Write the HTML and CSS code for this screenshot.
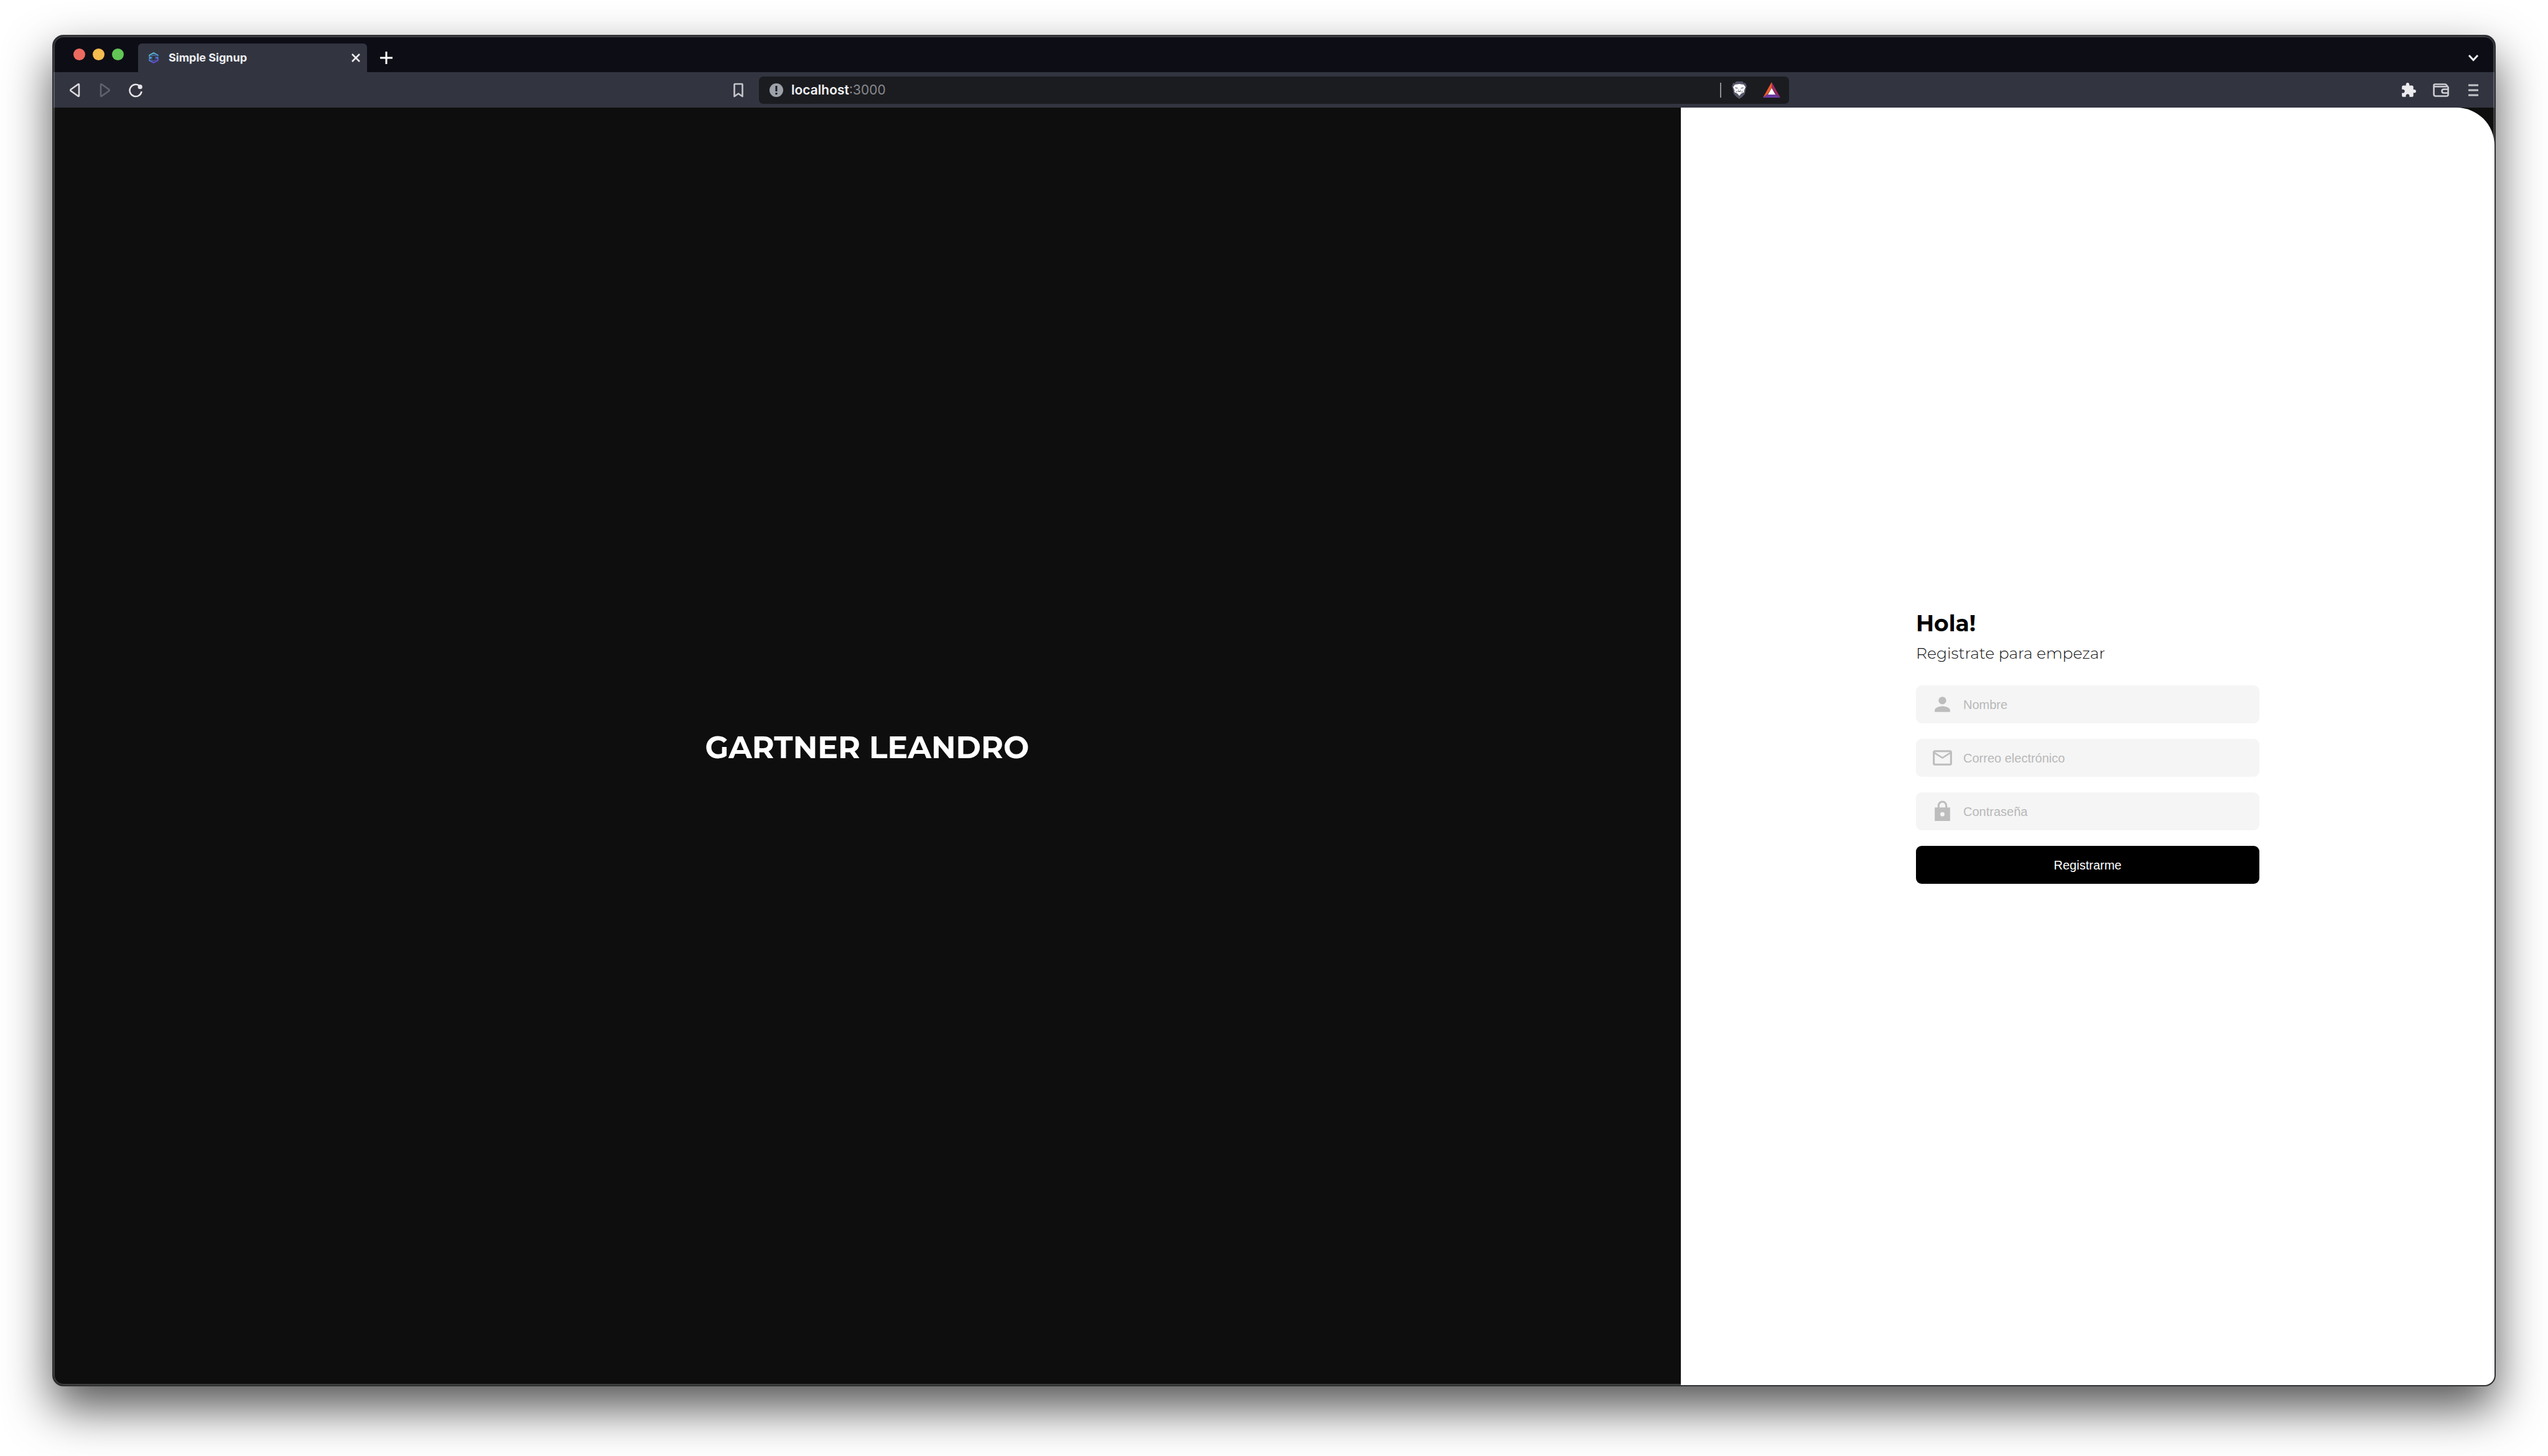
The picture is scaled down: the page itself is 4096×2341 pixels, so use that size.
FILE: index.html
```html
<!DOCTYPE html>
<html lang="es">
<head>
<meta charset="utf-8">
<meta name="viewport" content="width=device-width, initial-scale=1">
<title>Simple Signup</title>
<link rel="stylesheet" href="styles.css">
</head>
<body>
<div class="window">
  <header class="tab-strip">
    <div class="lights">
      <button class="light light-close" type="button" aria-label="Cerrar"></button>
      <button class="light light-min" type="button" aria-label="Minimizar"></button>
      <button class="light light-max" type="button" aria-label="Maximizar"></button>
    </div>
    <div class="tab">
      <svg class="favicon" viewBox="0 0 22 24" fill="none">
        <defs>
          <linearGradient id="fav" x1="4" y1="0" x2="15" y2="24" gradientUnits="userSpaceOnUse">
            <stop offset="0" stop-color="#5ec4c8"/>
            <stop offset=".5" stop-color="#4a90e2"/>
            <stop offset="1" stop-color="#6a35d0"/>
          </linearGradient>
        </defs>
        <path d="M2 8V6.500L11 1.500L20 6.500V8M2 16V17.500L11 22.500L20 17.500V13" stroke="url(#fav)" stroke-width="2.800"/>
        <path d="M5.500 8.500L11 6L16.500 8.500M5.500 16L11 18.500L16.500 16" stroke="url(#fav)" stroke-width="1.200"/>
        <path d="M1 8L9 12L1 16ZM21 9L13 12L21 15Z" fill="url(#fav)"/>
      </svg>
      <span class="tab-title">Simple Signup</span>
      <button class="tab-close" type="button" aria-label="Cerrar pestaña">
        <svg width="14" height="14" viewBox="0 0 14 14" stroke="#ededf0" stroke-width="2.500"><path d="M1 1L13 13M13 1L1 13"/></svg>
      </button>
    </div>
    <button class="icon-button new-tab" type="button" aria-label="Nueva pestaña">
      <svg width="20" height="20" viewBox="0 0 20 20" stroke="#fff" stroke-width="3"><path d="M10 0V20M0 10H20"/></svg>
    </button>
    <button class="icon-button tab-search" type="button" aria-label="Buscar pestañas">
      <svg width="18" height="12" viewBox="0 0 18 12" fill="none" stroke="#ededf0" stroke-width="3"><path d="M2 2L9 9.500L16 2"/></svg>
    </button>
  </header>

  <div class="toolbar">
    <nav class="tools tools-left">
      <button class="icon-button" type="button" aria-label="Atrás">
        <svg width="18" height="24" viewBox="0 0 18 24" fill="none" stroke="#dcdce0" stroke-width="2.600" stroke-linejoin="round"><path d="M16 3.500V20.500Q16 22.500 14.200 21.300L3 13.200Q1.500 12 3 10.800L14.200 2.700Q16 1.500 16 3.500Z"/></svg>
      </button>
      <button class="icon-button" type="button" aria-label="Adelante">
        <svg width="18" height="24" viewBox="0 0 18 24" fill="none" stroke="#60636d" stroke-width="2.600" stroke-linejoin="round"><path d="M2 3.500V20.500Q2 22.500 3.800 21.300L15 13.200Q16.500 12 15 10.800L3.800 2.700Q2 1.500 2 3.500Z"/></svg>
      </button>
      <button class="icon-button" type="button" aria-label="Recargar">
        <svg width="24" height="24" viewBox="0 0 24 24" fill="none" stroke="#e6e6e9" stroke-width="2.500"><path d="M18.500 5.300A9.600 9.600 0 1 0 21.600 14"/><circle cx="19.200" cy="6.700" r="3.600" fill="#e6e6e9" stroke="none"/></svg>
      </button>
    </nav>
    <div class="address">
      <button class="bookmark" type="button" aria-label="Marcador">
        <svg width="16" height="24" viewBox="0 0 16 24" fill="none" stroke="#c6c7cc" stroke-width="2.600" stroke-linejoin="round"><path d="M1.500 22V3Q1.500 2 2.500 2H13.500Q14.500 2 14.500 3V22L8 17.500Z"/></svg>
      </button>
      <div class="url-bar">
        <svg width="22" height="22" viewBox="0 0 22 22"><circle cx="11" cy="11" r="11" fill="#9da1a9"/><path d="M9.500 4H12.500V13H9.500ZM9.500 15H12.500V18H9.500Z" fill="#1b1c20"/></svg>
        <div class="url"><span class="host">localhost</span><span class="port">:3000</span></div>
        <span class="divider"></span>
        <svg class="shield" width="24" height="28" viewBox="0 0 24 28">
          <path d="M7 0H17L19 2.500L22 2.500L24 8L23 10L21 20L17 24.500L12 28L7 24.500L3 20L1 10L0 8L2 2.500L5 2.500Z" fill="#565869"/>
          <path d="M5 5L9 4.500L12 4L15 4.500L19 5L22 9L19.500 15L20 17L15 19.500L12 23L9 19.500L4 17L4.500 15L2 9Z" fill="#fff"/>
          <path d="M5 9.500L9.500 10.300L9 11.600L5.500 10.800ZM19 9.500L14.500 10.300L15 11.600L18.500 10.800ZM10.500 10V14L9 15.500L12 17L15 15.500L13.500 14V10L14 14.500L12 15.800L10 14.500ZM6 15L9 17L7.500 17.500ZM18 15L15 17L16.500 17.500Z" fill="#565869"/>
        </svg>
        <svg width="28" height="25" viewBox="0 0 28 25"><path d="M14 0V9L8 19L0 25Z" fill="#f05a2b"/><path d="M14 0L28 25L20 19L14 9Z" fill="#9e2b62"/><path d="M0 25L8 19H20L28 25Z" fill="#6b3aa0"/><path d="M14 9.500L20 20H8Z" fill="#fff"/></svg>
      </div>
    </div>
    <div class="tools tools-right">
      <button class="icon-button" type="button" aria-label="Extensiones">
        <svg width="26" height="26" viewBox="0 0 24 24" fill="#ececef"><path d="M20.500 11H19V7c0-1.100-.9-2-2-2h-4V3.500C13 2.120 11.880 1 10.500 1S8 2.120 8 3.500V5H4c-1.100 0-1.990.9-1.990 2v3.800H3.500c1.490 0 2.700 1.210 2.700 2.700s-1.210 2.700-2.700 2.700H2V20c0 1.100.9 2 2 2h3.800v-1.500c0-1.490 1.210-2.700 2.700-2.700s2.700 1.210 2.700 2.700V22H17c1.100 0 2-.9 2-2v-4h1.500c1.380 0 2.500-1.120 2.500-2.500S21.880 11 20.500 11z"/></svg>
      </button>
      <button class="icon-button" type="button" aria-label="Cartera">
        <svg width="26" height="22" viewBox="0 0 26 22" fill="none" stroke="#cdced3" stroke-width="2.600" stroke-linejoin="round"><path d="M1.500 3.500Q1.500 1.500 3.500 1.500H19.500Q21 1.500 22 3L24.500 6.500V18Q24.500 20.500 22 20.500H4.500Q1.500 20.500 1.500 17.500Z"/><path d="M2 5.300H22.500"/><path d="M24.500 9.500H17.500Q14.500 9.500 14.500 12.500T17.500 15.500H24.500"/></svg>
      </button>
      <button class="icon-button" type="button" aria-label="Menú">
        <svg width="16" height="20" viewBox="0 0 16 20" stroke="#c4c5ca" stroke-width="3"><path d="M0 2H16M0 10H16M0 18H16"/></svg>
      </button>
    </div>
  </div>

  <main class="page">
    <section class="brand">
      <h1 class="brand-name">GARTNER LEANDRO</h1>
    </section>
    <section class="panel">
      <form class="signup">
        <h2 class="greeting">Hola!</h2>
        <p class="intro">Registrate para empezar</p>
        <div class="fields">
          <label class="field">
            <svg class="field-icon" viewBox="0 0 24 24"><path d="M12 12c2.210 0 4-1.790 4-4s-1.790-4-4-4-4 1.790-4 4 1.790 4 4 4zm0 2c-2.670 0-8 1.340-8 4v2h16v-2c0-2.660-5.330-4-8-4z"/></svg>
            <input class="field-input" type="text" placeholder="Nombre" aria-label="Nombre">
          </label>
          <label class="field">
            <svg class="field-icon" viewBox="0 0 24 24"><path d="M22 6c0-1.100-.9-2-2-2H4c-1.100 0-2 .9-2 2v12c0 1.100.9 2 2 2h16c1.100 0 2-.9 2-2V6zm-2 0l-8 5-8-5h16zm0 12H4V8l8 5 8-5v10z"/></svg>
            <input class="field-input" type="email" placeholder="Correo electrónico" aria-label="Correo electrónico">
          </label>
          <label class="field">
            <svg class="field-icon" viewBox="0 0 24 24"><path fill-rule="evenodd" d="M20 8h-3V6c0-2.760-2.240-5-5-5S7 3.240 7 6v2H4v14h16V8zm-8 9.200a2.200 2.200 0 1 1 0-4.400 2.200 2.200 0 0 1 0 4.400zM9 8V6c0-1.660 1.340-3.100 3-3.100s3 1.440 3 3.100v2H9z"/></svg>
            <input class="field-input" type="password" placeholder="Contraseña" aria-label="Contraseña">
          </label>
          <button class="submit" type="submit">Registrarme</button>
        </div>
      </form>
    </section>
  </main>
</div>
</body>
</html>
```
FILE: styles.css
```css
* {
  box-sizing: border-box;
}

body {
  display: flex;
  min-height: 100vh;
  margin: 0;
  padding: 56px 84px 112px;
  background: #fff;
  font-family: Inter, "Liberation Sans", sans-serif;
}

h1,
h2,
p {
  margin: 0;
}

button {
  padding: 0;
  border: 0;
  background: none;
  cursor: pointer;
}

svg {
  display: block;
  flex: none;
}

/* Browser window */
.window {
  position: relative;
  display: flex;
  flex: 1;
  flex-direction: column;
  overflow: hidden;
  border: 2px solid #2f3032;
  border-radius: 18px;
  background: #0e0e0e;
  box-shadow: 0 35px 76px rgba(0, 0, 0, 0.67);
}

.window::after {
  position: absolute;
  inset: 0;
  border: 2px solid rgba(255, 255, 255, 0.2);
  border-radius: 16px;
  content: "";
  pointer-events: none;
}

.tab-strip {
  display: flex;
  align-items: flex-end;
  height: 58px;
  padding: 0 18px 0 32px;
  background: #0d0d16;
}

.lights {
  display: flex;
  align-self: center;
  gap: 12px;
  margin-right: 23px;
}

.light {
  width: 19px;
  height: 19px;
  border-radius: 50%;
}

.light-close {
  background: #ed6a5f;
}

.light-min {
  background: #f5bd4f;
}

.light-max {
  background: #62c656;
}

.tab {
  display: flex;
  align-items: center;
  width: 368px;
  height: 46px;
  padding: 0 10px 0 16px;
  border-radius: 6px 6px 0 0;
  background: #323540;
}

.favicon {
  width: 18px;
  height: 18px;
}

.tab-title {
  flex: 1;
  margin-left: 15px;
  color: #ededf0;
  font-size: 18px;
  font-weight: 700;
  line-height: 24px;
}

.tab-close {
  display: flex;
  align-items: center;
  justify-content: center;
  width: 16px;
  height: 32px;
}

.icon-button {
  display: flex;
  align-items: center;
  justify-content: center;
  width: 32px;
  height: 46px;
}

.new-tab {
  margin-left: 15px;
}

.tab-search {
  margin-left: auto;
}

.toolbar {
  display: grid;
  grid-template-columns: 1093fr 1697fr 1134fr;
  align-items: center;
  height: 57px;
  background: #323540;
}

.tools {
  display: flex;
  padding: 0 18px;
}

.tools-left {
  gap: 17px;
}

.tools-right {
  justify-content: flex-end;
  gap: 20px;
}

.address {
  display: flex;
  align-items: center;
  gap: 25px;
}

.url-bar {
  display: flex;
  flex: 1;
  align-items: center;
  height: 44px;
  padding: 0 14px 0 17px;
  border-radius: 7px;
  background: #1b1c20;
}

.url {
  flex: 1;
  margin-left: 13px;
  font-size: 21px;
  line-height: 28px;
}

.host {
  color: #f2f2f4;
  font-weight: 600;
}

.port {
  color: #88898e;
}

.divider {
  width: 2px;
  height: 24px;
  background: #8f9095;
}

.shield {
  margin: 0 26px 0 17px;
}

/* Signup page */
.page {
  display: grid;
  flex: 1;
  grid-template-columns: 2fr 1fr;
  background: #0e0e0e;
}

.brand,
.panel {
  display: flex;
  align-items: center;
  justify-content: center;
}

.brand {
  padding-top: 4px;
}

.brand-name {
  color: #fff;
  font-family: Montserrat, Inter, sans-serif;
  font-size: 49px;
  font-weight: 700;
  line-height: 60px;
}

.panel {
  border-top-right-radius: 61px;
  background: #fff;
}

.signup {
  width: 552px;
}

.greeting {
  color: #000;
  font-family: Montserrat, Inter, sans-serif;
  font-size: 36px;
  font-weight: 700;
  line-height: 46px;
}

.intro {
  margin-top: 10px;
  color: #111;
  font-family: Montserrat, Inter, sans-serif;
  font-size: 25px;
  font-weight: 300;
  line-height: 30px;
}

.fields {
  display: grid;
  gap: 25px;
  margin-top: 37px;
}

.field {
  display: flex;
  align-items: center;
  gap: 15px;
  height: 61px;
  padding: 0 24px;
  border-radius: 9px;
  background: #f5f5f5;
}

.field-icon {
  width: 37px;
  height: 37px;
  fill: #bdbdbd;
}

.field-input {
  flex: 1;
  min-width: 0;
  padding: 0;
  border: 0;
  outline: 0;
  background: none;
  color: #222;
  font-family: "Liberation Sans", Arial, sans-serif;
  font-size: 20px;
  line-height: 24px;
}

.field-input::placeholder {
  color: #b8b8b8;
  opacity: 1;
}

.submit {
  height: 61px;
  border-radius: 9px;
  background: #000;
  color: #fff;
  font-family: "Liberation Sans", Arial, sans-serif;
  font-size: 20px;
  line-height: 24px;
}
```
